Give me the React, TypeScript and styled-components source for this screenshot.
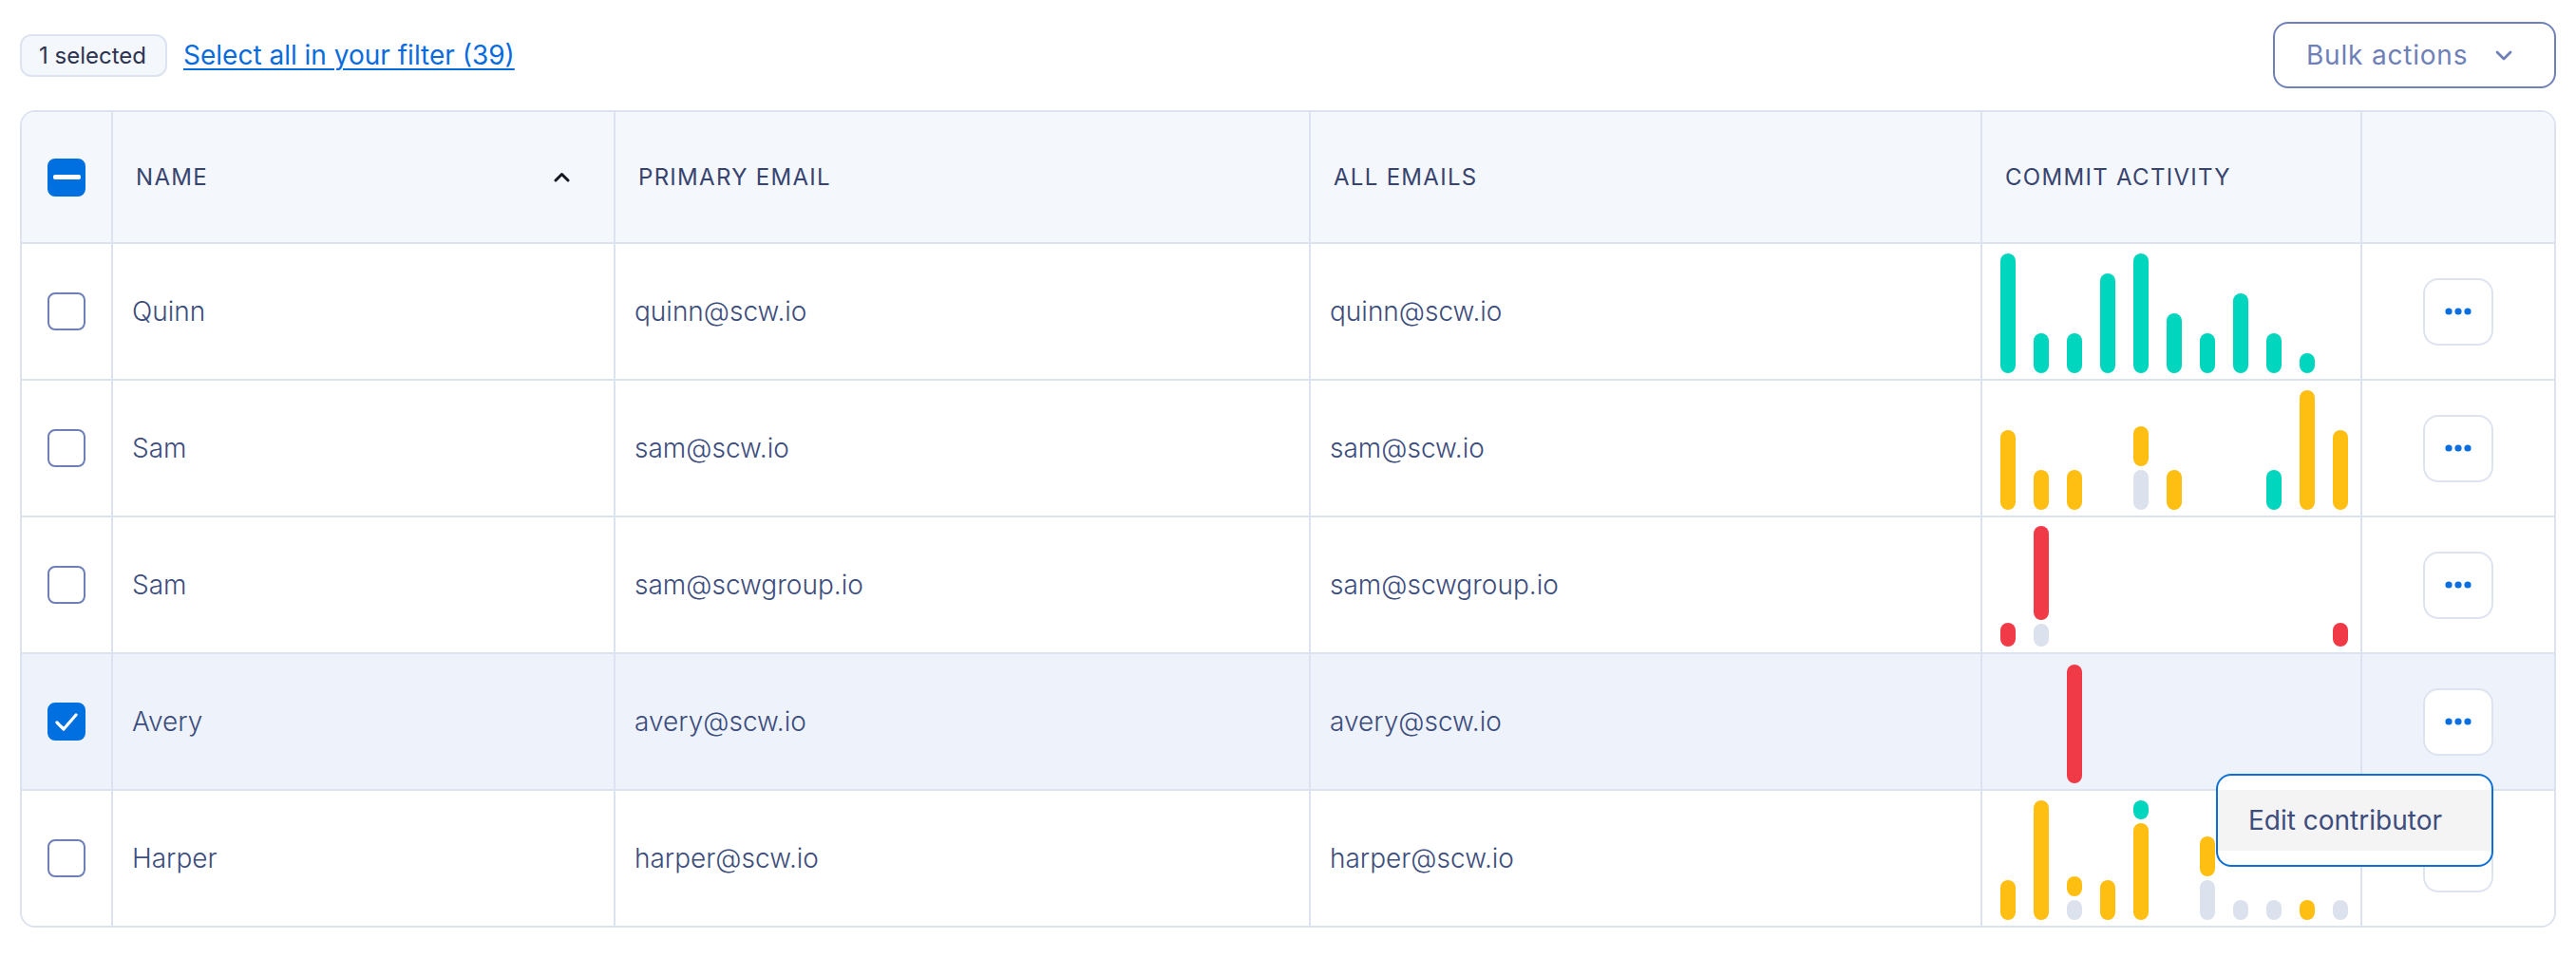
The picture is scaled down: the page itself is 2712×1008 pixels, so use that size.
import React from "react";
import styled, { createGlobalStyle } from "styled-components";

const GlobalStyle = createGlobalStyle`
  body {
    margin: 0;
    background: #fff;
    font-family: Inter, "Noto Sans", "Liberation Sans", sans-serif;
    color: #3d4d7c;
  }
`;

type Tone = "teal" | "yellow" | "red" | "gray";
type Segment = { tone: Tone; h: number };
type Contributor = {
  name: string;
  email: string;
  selected?: boolean;
  bars: Segment[][];
  menuOpen?: boolean;
};

const TONES: Record<Tone, string> = {
  teal: "#00d5be",
  yellow: "#ffbe12",
  red: "#f03a47",
  gray: "#dce1ee",
};

const t = (h: number): Segment => ({ tone: "teal", h });
const y = (h: number): Segment => ({ tone: "yellow", h });
const r = (h: number): Segment => ({ tone: "red", h });
const g = (h: number): Segment => ({ tone: "gray", h });

// segments listed bottom to top
const contributors: Contributor[] = [
  {
    name: "Quinn",
    email: "quinn@scw.io",
    bars: [[t(126)], [t(42)], [t(42)], [t(105)], [t(126)], [t(63)], [t(42)], [t(84)], [t(42)], [t(21)], []],
  },
  {
    name: "Sam",
    email: "sam@scw.io",
    bars: [[y(84)], [y(42)], [y(42)], [], [g(42), y(42)], [y(42)], [], [], [t(42)], [y(126)], [y(84)]],
  },
  {
    name: "Sam",
    email: "sam@scwgroup.io",
    bars: [[r(25)], [g(24), r(99)], [], [], [], [], [], [], [], [], [r(25)]],
  },
  {
    name: "Avery",
    email: "avery@scw.io",
    selected: true,
    menuOpen: true,
    bars: [[], [], [r(125)], [], [], [], [], [], [], [], []],
  },
  {
    name: "Harper",
    email: "harper@scw.io",
    bars: [[y(42)], [y(126)], [g(21), y(21)], [y(42)], [y(102), t(20)], [], [g(42), y(42)], [g(21)], [g(21)], [y(21)], [g(21)]],
  },
];

const Page = styled.div`
  padding: 23px 21px;
`;

const Toolbar = styled.div`
  display: flex;
  align-items: center;
  justify-content: space-between;
  height: 70px;
  margin-bottom: 23px;
`;

const Selection = styled.div`
  display: flex;
  align-items: center;
  gap: 17px;
`;

const CountPill = styled.span`
  display: inline-flex;
  align-items: center;
  height: 45px;
  box-sizing: border-box;
  padding: 0 20px 0 18px;
  border: 2px solid #dde3f0;
  border-radius: 12px;
  background: #f4f7fb;
  font-size: 24px;
  color: #2c3451;
`;

const SelectAll = styled.a`
  font-size: 28px;
  color: #0a6cdc;
  text-decoration: underline;
  text-decoration-thickness: 2px;
  text-underline-offset: 4px;
  cursor: pointer;
`;

const BulkButton = styled.button`
  display: flex;
  align-items: center;
  gap: 29px;
  width: 298px;
  height: 70px;
  box-sizing: border-box;
  padding: 0 0 0 33px;
  border: 2px solid #7080b8;
  border-radius: 16px;
  background: #fff;
  font-family: inherit;
  font-size: 28px;
  letter-spacing: 0.8px;
  color: #6f7fb7;
  cursor: pointer;
`;

const Table = styled.div`
  border: 2px solid #dce2ef;
  border-radius: 16px;
  overflow: hidden;
`;

const Row = styled.div<{ $head?: boolean; $selected?: boolean }>`
  display: grid;
  grid-template-columns: 96px 529px 732px 707px 400px 1fr;
  height: ${(p) => (p.$head ? 139 : 144)}px;
  box-sizing: border-box;
  border-bottom: 2px solid #dce2ef;
  background: ${(p) => (p.$head ? "#f4f7fb" : p.$selected ? "#eef3fb" : "#fff")};

  &:last-child {
    border-bottom: none;
    height: 142px;
  }
`;

const Cell = styled.div<{ $center?: boolean }>`
  display: flex;
  align-items: center;
  justify-content: ${(p) => (p.$center ? "center" : "flex-start")};
  padding: ${(p) => (p.$center ? "0" : "0 24px")};
  box-sizing: border-box;
  border-right: 2px solid #dce2ef;
  min-width: 0;

  &:last-child {
    border-right: none;
  }
`;

const HeadCell = styled(Cell)`
  font-size: 24px;
  letter-spacing: 1.3px;
  color: #37446f;
  text-transform: uppercase;
`;

const NameHead = styled(HeadCell)`
  justify-content: space-between;
  padding-right: 46px;
`;

const DataCell = styled(Cell)`
  padding-left: 20px;
`;

const DataText = styled.span`
  font-size: 28px;
  font-weight: 300;
  color: #3d4d7c;
  white-space: nowrap;
`;

const ChartCell = styled(Cell)`
  padding: 0 0 0 19px;
`;

const Chart = styled.div`
  display: flex;
  align-items: flex-end;
  gap: 19px;
  height: 127px;
  margin-top: 2px;
`;

const Bar = styled.div`
  display: flex;
  flex-direction: column-reverse;
  gap: 4px;
  width: 16px;
`;

const Seg = styled.div<{ $tone: Tone }>`
  width: 16px;
  border-radius: 8px;
  background: ${(p) => TONES[p.$tone]};
`;

const Box = styled.span<{ $on?: boolean }>`
  display: inline-flex;
  align-items: center;
  justify-content: center;
  width: 40px;
  height: 40px;
  box-sizing: border-box;
  border-radius: 8px;
  border: 2px solid ${(p) => (p.$on ? "#0070e0" : "#6f7fb7")};
  background: ${(p) => (p.$on ? "#0070e0" : "#fff")};
`;

const Dash = styled.span`
  width: 29px;
  height: 5px;
  border-radius: 2px;
  background: #fff;
`;

const MenuAnchor = styled.div`
  position: relative;
`;

const MoreButton = styled.button`
  display: flex;
  align-items: center;
  justify-content: center;
  width: 74px;
  height: 71px;
  padding: 0;
  box-sizing: border-box;
  border: 2px solid #dde3f0;
  border-radius: 16px;
  background: #fff;
  cursor: pointer;
`;

const Menu = styled.div`
  position: absolute;
  right: 0;
  top: calc(100% + 19px);
  z-index: 5;
  width: 292px;
  box-sizing: border-box;
  padding: 15px 0;
  border: 2px solid #0b6fd9;
  border-radius: 16px;
  background: #fff;
`;

const MenuItem = styled.div`
  display: flex;
  align-items: center;
  height: 64px;
  padding-left: 32px;
  background: #f4f4f5;
  font-size: 28px;
  color: #3d4d7c;
  white-space: nowrap;
`;

const Checkbox = ({ state }: { state: "off" | "on" | "mixed" }) => (
  <Box $on={state !== "off"}>
    {state === "mixed" && <Dash />}
    {state === "on" && (
      <svg width="26" height="22" viewBox="0 0 26 22" fill="none">
        <path d="M3 12l7 7L23 4" stroke="#fff" strokeWidth="3.2" strokeLinecap="round" strokeLinejoin="round" />
      </svg>
    )}
  </Box>
);

const Dots = () => (
  <svg width="28" height="8" viewBox="0 0 28 8">
    <circle cx="4" cy="4" r="3.6" fill="#0a6de0" />
    <circle cx="14" cy="4" r="3.6" fill="#0a6de0" />
    <circle cx="24" cy="4" r="3.6" fill="#0a6de0" />
  </svg>
);

const App = (): JSX.Element => {
  return (
    <Page>
      <GlobalStyle />
      <Toolbar>
        <Selection>
          <CountPill>1 selected</CountPill>
          <SelectAll>Select all in your filter (39)</SelectAll>
        </Selection>
        <BulkButton>
          Bulk actions
          <svg width="18" height="11" viewBox="0 0 18 11" fill="none">
            <path d="M2 2l7 7 7-7" stroke="#6f7fb7" strokeWidth="2.8" strokeLinecap="round" strokeLinejoin="round" />
          </svg>
        </BulkButton>
      </Toolbar>

      <Table>
        <Row $head>
          <Cell $center>
            <Checkbox state="mixed" />
          </Cell>
          <NameHead>
            Name
            <svg width="17" height="11" viewBox="0 0 17 11" fill="none">
              <path d="M2 9l6.5-6.5L15 9" stroke="#151823" strokeWidth="3" strokeLinecap="round" strokeLinejoin="round" />
            </svg>
          </NameHead>
          <HeadCell>Primary email</HeadCell>
          <HeadCell>All emails</HeadCell>
          <HeadCell>Commit activity</HeadCell>
          <HeadCell />
        </Row>

        {contributors.map((c, i) => (
          <Row key={i} $selected={c.selected}>
            <Cell $center>
              <Checkbox state={c.selected ? "on" : "off"} />
            </Cell>
            <DataCell>
              <DataText>{c.name}</DataText>
            </DataCell>
            <DataCell>
              <DataText>{c.email}</DataText>
            </DataCell>
            <DataCell>
              <DataText>{c.email}</DataText>
            </DataCell>
            <ChartCell>
              <Chart>
                {c.bars.map((segs, j) => (
                  <Bar key={j}>
                    {segs.map((s, k) => (
                      <Seg key={k} $tone={s.tone} style={{ height: s.h }} />
                    ))}
                  </Bar>
                ))}
              </Chart>
            </ChartCell>
            <Cell $center>
              <MenuAnchor>
                <MoreButton>
                  <Dots />
                </MoreButton>
                {c.menuOpen && (
                  <Menu>
                    <MenuItem>Edit contributor</MenuItem>
                  </Menu>
                )}
              </MenuAnchor>
            </Cell>
          </Row>
        ))}
      </Table>
    </Page>
  );
};

export default App;
